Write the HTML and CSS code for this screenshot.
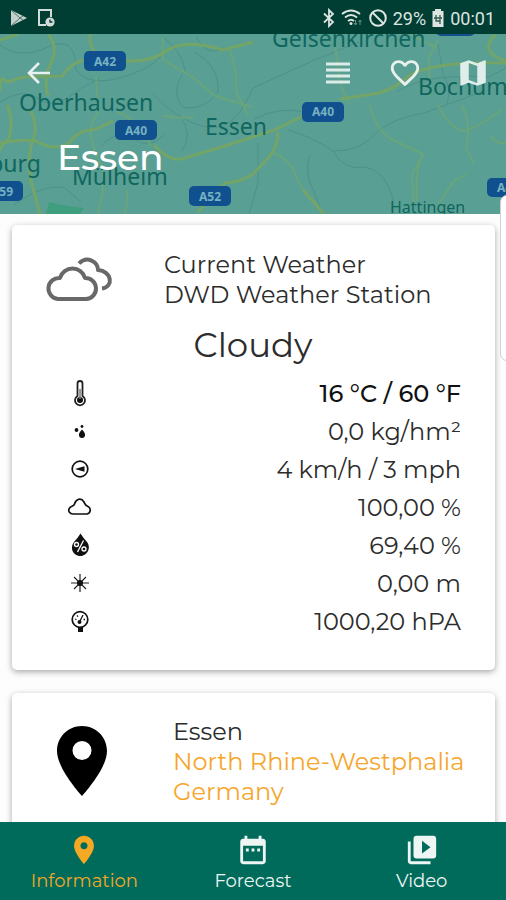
FILE: index.html
```html
<!DOCTYPE html>
<html lang="en">
<head>
<meta charset="utf-8">
<meta name="viewport" content="width=device-width, initial-scale=1">
<title>Essen</title>
<link rel="stylesheet" href="styles.css">
</head>
<body>
<div class="app">
  <div class="status">
    <div class="status-group">
      <svg width="18" height="20" viewBox="0 0 18 20"><path d="M1 2 L17 10 L1 18 Z" fill="#c3cfca"/><path d="M1 2 L10 10 L1 18 M10 10 L13 8 M10 10 L13 12" fill="none" stroke="#50736a" stroke-width="1"/></svg>
      <svg width="18" height="20" viewBox="0 0 18 20"><path d="M14 9 V2 H2 V17 H9" fill="none" stroke="#d3dcd9" stroke-width="2"/><circle cx="13" cy="14" r="4.6" fill="#d3dcd9"/><path d="M13 11.500 V14 H15.500" fill="none" stroke="#003d32" stroke-width="1.300"/></svg>
    </div>
    <div class="status-group">
      <svg width="14" height="20" viewBox="0 0 14 20"><path d="M2 5.500 L11 14 L7 18 V2 L11 6 L2 14.500" fill="none" stroke="#dce5e2" stroke-width="1.800"/></svg>
      <svg width="22" height="20" viewBox="0 0 22 20"><g fill="none" stroke="#dce5e2" stroke-width="2"><path d="M1 6 Q10 -1 19 6"/><path d="M4 9.500 Q10 4.500 16 9.500"/><path d="M7 13 Q10 10.500 13 13"/></g><circle cx="10" cy="15.500" r="1.500" fill="#dce5e2"/><path d="M14.500 12 v5 m-1.500 -2 l1.500 2 l1.500 -2 M19 17 v-5 m-1.500 2 l1.500 -2 l1.500 2" stroke="#6a8d84" fill="none"/></svg>
      <svg width="20" height="20" viewBox="0 0 20 20"><circle cx="10" cy="10" r="7.800" fill="none" stroke="#dce5e2" stroke-width="2"/><path d="M4.500 4.500 L15.500 15.500" stroke="#dce5e2" stroke-width="2"/></svg>
      <span class="battery">29%</span>
      <svg width="14" height="20" viewBox="0 0 14 20"><path d="M4 1 h6 v2 h2.500 v16 h-11 v-16 h2.500 z" fill="#dce5e2"/><path d="M5 7 v6 h4 M9 7 v9 M3 10 h8" fill="none" stroke="#31594f" stroke-width="1.300"/></svg>
      <span>00:01</span>
    </div>
  </div>

  <header class="hero">
    <svg class="map" viewBox="0 34 506 180" preserveAspectRatio="xMidYMid slice" aria-hidden="true">
      <rect x="-500" y="0" width="1600" height="300" fill="#5a9f94"/>
      <path d="M46 214 L49 202 Q65 206 84 208 L80 214Z" fill="#3e9e7e"/>
      <g class="minor">
        <path d="M0 45 Q20 60 48 47 T76 70 Q90 88 126 76 T164 48"/>
        <path d="M0 102 Q24 87 39 99 T81 88 L99 79"/>
        <path d="M164 38 Q181 50 185 70 Q169 94 184 108 Q207 109 218 92 Q220 66 194 52"/>
        <path d="M153 94 Q176 119 202 126 T244 106 L253 88 L310 62 L359 42"/>
        <path d="M254 119 Q280 106 303 112 M289 130 Q314 138 333 151 Q361 151 375 134 Q389 119 424 113 L484 91"/>
        <path d="M333 151 Q344 171 365 167 Q386 171 393 199 V214"/>
        <path d="M310 154 Q303 173 315 194 L322 214 M258 142 V183 L249 214"/>
        <path d="M14 205 Q44 183 65 188 L81 202 M179 115 Q194 133 182 151"/>
        <path d="M101 146 Q119 128 134 139 T164 135 M196 37 Q209 58 222 48"/>
        <path d="M438 44 L443 74 Q452 88 447 104 M397 92 Q424 73 489 77 L506 68"/>
      </g>
      <g class="road faint">
        <path d="M96 76 L98 112 Q88 126 92 141 T103 167 V190 L98 214"/>
        <path d="M117 112 Q137 119 151 146 M163 38 V60 L194 78 L215 96 L253 107"/>
        <path d="M229 48 Q238 73 236 92 L248 115 M162 116 Q180 119 194 117"/>
        <path d="M334 36 L338 68 Q340 91 350 104 M370 105 Q376 131 393 140 L423 154 Q415 169 417 201"/>
        <path d="M423 154 L412 174 L414 205 M438 205 L453 182 L466 174"/>
        <path d="M438 105 Q450 129 464 131 Q479 127 501 110 M462 105 Q472 126 466 148 L474 164"/>
        <path d="M410 34 L437 48 M430 97 L429 57 L438 40 M490 136 Q498 145 506 143"/>
        <path d="M127 190 Q128 203 124 214 M274 153 Q291 161 295 174 T318 205"/>
      </g>
      <g class="road">
        <path d="M48 34 Q59 48 51 63 Q43 78 48 96"/>
        <path d="M0 91 Q0 73 7 82 L24 77 L62 76 Q70 64 83 60 M125 61 Q152 62 166 51 Q185 38 223 50 L253 42"/>
        <path d="M90 34 Q89 48 98 56 M0 143 Q23 139 36 141 Q54 152 69 143 Q76 131 96 129 L113 121"/>
        <path d="M7 105 Q14 119 9 139 Q0 146 0 151 M30 109 Q38 125 34 137 Q26 158 31 181 L40 214"/>
        <path d="M154 145 Q171 165 188 157 L225 146 L274 130 L303 116 M340 99 L367 95 Q389 93 405 79 Q424 61 506 63"/>
        <path d="M278 132 Q278 145 270 156 L253 174 Q242 182 225 183 L198 212 M303 190 L324 214"/>
        <path d="M0 40 L18 34 M496 34 Q477 52 506 61"/>
      </g>
      <g class="place">
        <text x="19" y="111">Oberhausen</text>
        <text x="272" y="47">Gelsenkirchen</text>
        <text x="418" y="95">Bochum</text>
        <text x="205" y="135">Essen</text>
        <text x="41" y="172" text-anchor="end">Duisburg</text>
        <text x="72" y="185">Mülheim</text>
        <text class="small" x="390" y="213">Hattingen</text>
      </g>
      <g class="shield">
        <rect x="84" y="51" width="42" height="20" rx="5"/><text x="105" y="66">A42</text>
        <rect x="115" y="120" width="42" height="20" rx="5"/><text x="136" y="135">A40</text>
        <rect x="302" y="102" width="42" height="20" rx="5"/><text x="323" y="116">A40</text>
        <rect x="189" y="186" width="42" height="20" rx="5"/><text x="210" y="201">A52</text>
        <rect x="-19" y="181" width="42" height="20" rx="5"/><text x="2" y="196">A59</text>
        <rect x="487" y="178" width="42" height="19" rx="5"/><text x="508" y="192">A43</text>
        <rect x="436" y="16" width="39" height="20" rx="5"/>
      </g>
    </svg>
    <div class="toolbar">
      <button class="tool" aria-label="Back"><svg width="30" height="28" viewBox="0 0 30 28"><path d="M27 14 H7 M16 4 L6 14 L16 24" fill="none" stroke="#e7f1ee" stroke-width="2.600"/></svg></button>
      <div class="tools">
        <button class="tool" aria-label="List"><svg width="30" height="28" viewBox="0 0 30 28"><path d="M2 5 H26 M2 11 H26 M2 17 H26 M2 23 H26" stroke="#dcece8" stroke-width="3"/></svg></button>
        <button class="tool" aria-label="Favourite"><svg width="34" height="34" viewBox="0 0 24 24"><path fill="#e7f1ee" d="M16.500 3c-1.740 0-3.410.810-4.500 2.090C10.910 3.810 9.240 3 7.500 3 4.420 3 2 5.420 2 8.500c0 3.780 3.400 6.860 8.550 11.540L12 21.350l1.450-1.320C18.600 15.360 22 12.280 22 8.500 22 5.420 19.580 3 16.500 3zm-4.400 15.550l-.1.100-.1-.1C7.140 14.240 4 11.390 4 8.500 4 6.500 5.500 5 7.500 5c1.540 0 3.040.990 3.570 2.360h1.870C13.460 5.990 14.960 5 16.500 5c2 0 3.500 1.500 3.500 3.500 0 2.890-3.140 5.740-7.900 10.050z"/></svg></button>
        <button class="tool" aria-label="Map"><svg width="34" height="34" viewBox="0 0 24 24"><path fill="#dfeeea" d="M20.500 3l-.160.030L15 5.100 9 3 3.360 4.900c-.210.070-.360.250-.360.480V20.500c0 .280.220.500.500.500l.160-.030L9 18.900l6 2.100 5.640-1.900c.210-.070.360-.250.360-.480V3.500c0-.280-.220-.500-.500-.500zM15 19l-6-2.110V5l6 2.110V19z"/></svg></button>
      </div>
    </div>
    <h1>Essen</h1>
  </header>

  <main>
    <section class="card">
      <div class="card-head">
        <svg width="70" height="60" viewBox="0 0 70 60"><g fill="none" stroke="#686868" stroke-width="4" stroke-linecap="round" stroke-linejoin="round"><path d="M13 49 H41 A10.500 10.500 0 0 0 40 28 A13 13 0 0 0 15 28 A10.500 10.500 0 0 0 13 49 Z"/><path stroke-linecap="butt" d="M34 13.500 C42 5 53 12 53 20 C67 21 69 37 57 38.500"/></g></svg>
        <p>Current Weather<br>DWD Weather Station</p>
      </div>
      <h2>Cloudy</h2>
      <ul class="readings">
        <li><svg class="icon" viewBox="0 0 28 28"><path d="M11.500 17 V4.500 a2.500 2.500 0 0 1 5 0 V17 a5 5 0 1 1 -5 0Z" fill="#fff" stroke="#222" stroke-width="1.800"/><circle cx="14" cy="21" r="3" fill="#111"/><path d="M14 10 V20" stroke="#777" stroke-width="1.500"/></svg><strong>16 °C / 60 °F</strong></li>
        <li><svg class="icon" viewBox="0 0 28 28"><path d="M16 12.500 Q12.500 16 13 18 A3 3 0 0 0 19 18 Q19.500 16 16 12.500Z"/><circle cx="10.500" cy="13" r="1.900"/><circle cx="16" cy="9.500" r="1.400"/></svg><span>0,0 kg/hm²</span></li>
        <li><svg class="icon" viewBox="0 0 28 28"><circle cx="14" cy="14" r="7.800" fill="none" stroke="#111" stroke-width="1.700"/><path d="M9 14 L14 12.500 L18.500 11.200 V16.800 L14 15.500Z"/></svg><span>4 km/h / 3 mph</span></li>
        <li><svg class="icon" viewBox="0 0 28 28"><path d="M7 21 H21 A4 4 0 0 0 22 13.500 C19 12.500 19 11 18 9 C15 4 10 6 8.500 11 C8 13 6 13 4 14.500 C1 18 4 21 7 21Z" fill="none" stroke="#111" stroke-width="1.700"/></svg><span>100,00 %</span></li>
        <li><svg class="icon" viewBox="0 0 28 28"><path d="M14.500 2.500 Q18 8 21 11 C26 18 20 25 14.500 25 C8 25 3 18 8 11 Q11 8 14.500 2.500Z"/><g fill="none" stroke="#fff" stroke-width="1.300"><path d="M17.500 9.500 L11.500 21"/><circle cx="10.500" cy="13.500" r="2"/><circle cx="18" cy="18" r="2"/></g></svg><span>69,40 %</span></li>
        <li><svg class="icon" viewBox="0 0 28 28"><g stroke="#222" stroke-width="1.200"><path d="M14 5 V23 M5 14 H23 M8 8 L20 20 M20 8 L8 20"/></g><circle cx="14" cy="14" r="3"/></svg><span>0,00 m</span></li>
        <li><svg class="icon" viewBox="0 0 28 28"><circle cx="14" cy="12.500" r="7.800" fill="#fff" stroke="#111" stroke-width="1.700"/><path d="M12 20 H17 V25 H12Z"/><circle cx="13.500" cy="15" r="2"/><path d="M13.500 15 L17 8 M9 12 l1.500 .5 M11 8.500 l1 1.200 M19 12.500 h-1.500" stroke="#111" stroke-width="1.300"/></svg><span>1000,20 hPA</span></li>
      </ul>
    </section>

    <section class="card">
      <div class="card-head place-head">
        <svg width="70" height="72" viewBox="0 0 70 72"><path fill-rule="evenodd" d="M37 0 C23 0 12 11 12 25 C12 43 37 70 37 70 C37 70 62 43 62 25 C62 11 51 0 37 0Z M37 15 a9.500 9.500 0 1 1 0 19 a9.500 9.500 0 1 1 0 -19Z"/></svg>
        <p>Essen<br><a href="#region">North Rhine-Westphalia</a><br><a href="#country">Germany</a></p>
      </div>
    </section>
  </main>

  <nav>
    <a class="active" href="#information"><svg width="34" height="34" viewBox="0 0 24 24"><path fill="currentColor" d="M12 2C8.130 2 5 5.130 5 9c0 5.250 7 13 7 13s7-7.750 7-13c0-3.870-3.130-7-7-7zm0 9.500c-1.380 0-2.500-1.120-2.500-2.500s1.120-2.500 2.500-2.500 2.500 1.120 2.500 2.500-1.120 2.500-2.500 2.500z"/></svg>Information</a>
    <a href="#forecast"><svg width="34" height="34" viewBox="0 0 24 24"><path fill="currentColor" d="M9 11H7v2h2v-2zm4 0h-2v2h2v-2zm4 0h-2v2h2v-2zm2-7h-1V2h-2v2H8V2H6v2H5c-1.110 0-1.990.9-1.990 2L3 20c0 1.100.890 2 2 2h14c1.100 0 2-.9 2-2V6c0-1.100-.9-2-2-2zm0 16H5V9h14v11z"/></svg>Forecast</a>
    <a href="#video"><svg width="34" height="34" viewBox="0 0 24 24"><path fill="currentColor" d="M4 6H2v14c0 1.100.9 2 2 2h14v-2H4V6zm16-4H8c-1.100 0-2 .9-2 2v12c0 1.100.9 2 2 2h12c1.100 0 2-.9 2-2V4c0-1.100-.9-2-2-2zm-8 12.500v-9l6 4.500-6 4.500z"/></svg>Video</a>
  </nav>
  <div class="edge-handle"></div>
</div>
</body>
</html>
```
FILE: styles.css
```css
* { box-sizing: border-box; }

body {
  margin: 0;
  color: #2c2c2c;
  background: #fdfdfd;
  font-family: Montserrat, Inter, sans-serif;
}

h1, h2, p, ul { margin: 0; padding: 0; font-weight: 400; }
a { color: inherit; text-decoration: none; }
svg { display: block; flex: none; }

.app {
  position: relative;
  display: flex;
  flex-direction: column;
  height: 100vh;
  overflow: hidden;
}

.status {
  flex: none;
  display: flex;
  justify-content: space-between;
  align-items: center;
  height: 34px;
  padding: 2px 11px 0 10px;
  background: #003d32;
  color: #dce5e2;
  font: 18px Roboto, sans-serif;
}
.status-group { display: flex; align-items: center; gap: 5px; }
.status-group:first-child { gap: 9px; }

.hero {
  position: relative;
  flex: none;
  height: 180px;
  padding: 20px 16px 0 23px;
  overflow: hidden;
}
.map {
  position: absolute;
  inset: 0;
  width: 100%;
  height: 100%;
}
.minor { fill: none; stroke: #4d9189; stroke-width: 1; }
.road { fill: none; stroke: #73a568; stroke-width: 3; }
.road.faint { stroke: #68a57a; stroke-width: 2; }
.place { fill: #0f665e; font: 23px "Noto Sans", sans-serif; }
.place .small { font-size: 16px; }
.shield { fill: #10508f; font: bold 12px "Noto Sans", sans-serif; text-anchor: middle; }
.shield text { fill: #76b2bf; }

.toolbar {
  position: relative;
  display: flex;
  justify-content: space-between;
  height: 38px;
}
.tools { display: flex; gap: 34px; }
.tool {
  display: flex;
  align-items: center;
  padding: 0;
  border: 0;
  background: none;
}

.hero h1 {
  position: relative;
  margin: 43px 0 0 34px;
  color: #fff;
  font-size: 36px;
  font-weight: 500;
  line-height: 44px;
}

main {
  flex: 1;
  min-height: 0;
  padding: 11px 11px 0 12px;
  overflow-y: auto;
  scrollbar-width: none;
}
.card {
  margin-bottom: 23px;
  padding: 25px 34px 30px 33px;
  border-radius: 5px;
  background: #fff;
  box-shadow: 0 2px 6px rgba(0, 0, 0, 0.34);
}
.card-head {
  display: flex;
  align-items: center;
  gap: 49px;
  font-size: 24px;
  line-height: 30px;
}
.card-head p { white-space: nowrap; }
.place-head {
  align-items: flex-start;
  gap: 58px;
  margin-top: -1px;
  padding-top: 0;
}
.place-head svg { margin-top: 9px; }
.place-head a { color: #f6a62c; }

.card h2 {
  padding: 11px 0 5px;
  font-size: 34px;
  line-height: 48px;
  text-align: center;
}

.readings {
  list-style: none;
  font-size: 24px;
}
.readings li {
  display: flex;
  align-items: center;
  justify-content: space-between;
  height: 38px;
  padding-left: 21px;
}
.readings strong { color: #111; font-weight: 500; }
.icon { width: 28px; height: 28px; fill: #111; }

nav {
  flex: none;
  display: grid;
  grid-template-columns: repeat(3, 1fr);
  height: 78px;
  padding-top: 11px;
  background: #006a5b;
  color: #eef6f4;
  font-size: 18px;
  line-height: 28px;
}
nav a { display: flex; flex-direction: column; align-items: center; }
nav .active { color: #f4a824; }

.edge-handle {
  position: absolute;
  top: 195px;
  right: -8px;
  width: 14px;
  height: 166px;
  border: 1px solid #d0d0d0;
  border-radius: 7px;
  background: #fff;
}
```
